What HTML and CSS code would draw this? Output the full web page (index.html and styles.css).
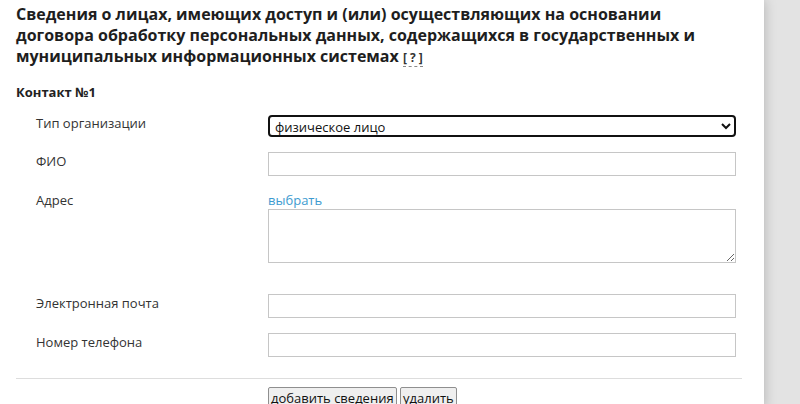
FILE: index.html
```html
<!DOCTYPE html>
<html lang="ru">
<head>
  <meta charset="UTF-8">
  <meta name="viewport" content="width=device-width, initial-scale=1.0">
  <title>Сведения о лицах</title>
  <link rel="stylesheet" href="styles.css">
</head>
<body>
  <div class="page">
    <h2 class="section-title">Сведения о лицах, имеющих доступ и (или) осуществляющих на основании договора обработку персональных данных, содержащихся в государственных и муниципальных информационных системах <span class="hint" title="Подсказка">[&nbsp;?&nbsp;]</span></h2>

    <div class="contact">
      <h3 class="contact-title">Контакт №1</h3>

      <div class="form-row">
        <label class="form-label" for="org-type">Тип организации</label>
        <div class="form-field">
          <select id="org-type" name="org-type" class="form-select">
            <option>физическое лицо</option>
            <option>юридическое лицо</option>
          </select>
        </div>
      </div>

      <div class="form-row">
        <label class="form-label" for="fio">ФИО</label>
        <div class="form-field">
          <input type="text" id="fio" name="fio" class="form-input">
        </div>
      </div>

      <div class="form-row form-row-address">
        <label class="form-label" for="address">Адрес</label>
        <div class="form-field">
          <a href="#" class="pick-link">выбрать</a>
          <textarea id="address" name="address" class="form-textarea"></textarea>
        </div>
      </div>

      <div class="form-row">
        <label class="form-label" for="email">Электронная почта</label>
        <div class="form-field">
          <input type="email" id="email" name="email" class="form-input">
        </div>
      </div>

      <div class="form-row">
        <label class="form-label" for="phone">Номер телефона</label>
        <div class="form-field">
          <input type="tel" id="phone" name="phone" class="form-input">
        </div>
      </div>

      <hr class="divider">

      <div class="actions">
        <button type="button" class="btn">добавить сведения</button>
        <button type="button" class="btn">удалить</button>
      </div>
    </div>
  </div>
</body>
</html>
```

FILE: styles.css
```css
/* Global Styles */
html,
body {
  overflow: hidden;
}

body {
  margin: 0;
  padding: 0;
  background-color: #e3e3e3;
  font-family: 'Open Sans', 'DejaVu Sans', sans-serif;
  font-size: 13px;
  line-height: 18px;
  color: #333;
}

.page {
  width: 764px;
  min-height: 100vh;
  box-sizing: border-box;
  padding: 4px 22px 0 16px;
  background-color: #ffffff;
  box-shadow: 0 0 12px rgba(0, 0, 0, 0.22);
}

.section-title {
  margin: 0;
  font-size: 16px;
  line-height: 21px;
  font-weight: bold;
  color: #1e1e1e;
}

.hint {
  font-size: 12px;
  line-height: 14px;
  color: #333;
  border-bottom: 1px dashed #888;
  cursor: help;
}

.contact-title {
  margin: 16px 0 14px;
  font-size: 13px;
  line-height: 18px;
  font-weight: bold;
  color: #222;
}

.form-row {
  display: flex;
  padding-left: 20px;
  margin-bottom: 15px;
}

.form-label {
  width: 232px;
  flex-shrink: 0;
}

.form-field {
  width: 468px;
}

.form-row:first-of-type .form-label {
  margin-top: -1px;
}

.form-row-address {
  margin-bottom: 31px;
}

.form-select {
  display: block;
  width: 100%;
  height: 22px;
  padding: 0 4px 0 1px;
  font-family: 'Open Sans', 'DejaVu Sans', sans-serif;
  font-size: 13px;
  color: #111;
  background-color: #fff;
  border: 2px solid #111;
  border-radius: 4px;
  box-sizing: border-box;
}

.form-input,
.form-textarea {
  display: block;
  width: 100%;
  height: 24px;
  padding: 2px 4px;
  font-family: 'Open Sans', 'DejaVu Sans', sans-serif;
  font-size: 13px;
  border: 1px solid #c6c6c6;
  border-radius: 0;
  box-sizing: border-box;
}

.form-textarea {
  height: 54px;
  resize: vertical;
}

.pick-link {
  display: block;
  color: #3d9bd0;
  text-decoration: none;
}

.divider {
  margin: 0;
  margin-top: 21px;
  border: none;
  border-top: 1px solid #ddd;
}

.actions {
  padding-left: 252px;
  margin-top: 8px;
}

.btn {
  padding: 1px 2px;
  font-family: 'Open Sans', 'DejaVu Sans', sans-serif;
  font-size: 13px;
  line-height: 18px;
  color: #111;
  background-color: #efefef;
  border: 1px solid #8f8f8f;
  border-radius: 2px;
  cursor: pointer;
}
```
